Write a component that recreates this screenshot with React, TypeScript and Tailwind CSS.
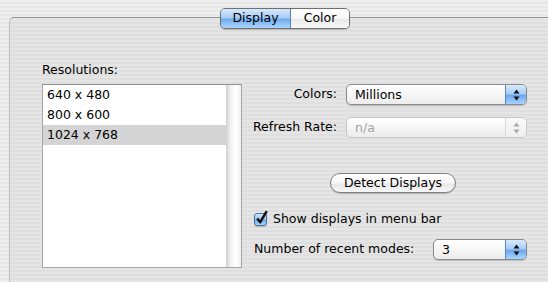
import React from 'react'

const stripes =
  'bg-[repeating-linear-gradient(180deg,#eeeeee_0px,#eeeeee_2px,#e8e8e8_2px,#e8e8e8_4px)]'

function Arrows({ disabled }: { disabled?: boolean }) {
  const c = disabled ? '#a8a8a8' : '#111'
  return (
    <svg width="7" height="12" viewBox="0 0 7 12">
      <path d="M3.5 0.5 L6.5 4.5 L0.5 4.5 Z" fill={c} />
      <path d="M3.5 11.5 L6.5 7.5 L0.5 7.5 Z" fill={c} />
    </svg>
  )
}

function Popup({
  value,
  className,
  disabled,
}: {
  value: string
  className: string
  disabled?: boolean
}) {
  return (
    <div
      className={`flex h-[21px] overflow-hidden rounded-[5px] border ${
        disabled
          ? 'border-[#c6c6c6] shadow-none'
          : 'border-[#8a8a8a] shadow-[0_1px_1px_rgba(0,0,0,0.18)]'
      } bg-[linear-gradient(180deg,#ffffff_0%,#f6f6f6_50%,#ececec_100%)] ${className}`}
    >
      <div
        className={`flex-1 pl-[8px] leading-[19px] ${
          disabled ? 'text-[#a3a3a3]' : 'text-black'
        }`}
      >
        {value}
      </div>
      <div
        className={`flex w-[21px] items-center justify-center border-l ${
          disabled
            ? 'border-[#d8d8d8] bg-[linear-gradient(180deg,#fafafa_0%,#efefef_100%)]'
            : 'border-[#5b86c4] bg-[linear-gradient(180deg,#d9eafc_0%,#a8cdf5_45%,#6ea8ec_55%,#a6d4ff_100%)]'
        }`}
      >
        <Arrows disabled={disabled} />
      </div>
    </div>
  )
}

export default function App() {
  const rows = ['640 x 480', '800 x 600', '1024 x 768']
  return (
    <div
      className={`h-[282px] w-[548px] overflow-hidden ${stripes} font-['DejaVu_Sans',sans-serif] text-[12.5px] text-black`}
    >
      {/* segmented tabs */}
      <div className="relative z-10 flex pl-[220px] pt-[8px]">
        <div className="flex h-[21px] overflow-hidden rounded-[5px] border border-[#6f6f6f] shadow-[0_1px_1px_rgba(0,0,0,0.2)]">
          <div className="flex w-[70px] items-center justify-center border-r border-[#5a7fb6] bg-[linear-gradient(180deg,#d6e9fc_0%,#a9cef6_45%,#72abee_55%,#a8d6ff_100%)] leading-none">
            Display
          </div>
          <div className="flex w-[58px] items-center justify-center bg-[linear-gradient(180deg,#ffffff_0%,#f7f7f7_50%,#e9e9e9_55%,#f8f8f8_100%)] leading-none">
            Color
          </div>
        </div>
      </div>

      {/* group box */}
      <div className="ml-[9px] -mt-[12px] h-[300px] w-[560px] rounded-tl-[5px] border-l border-t border-l-[#bdbdbd] border-t-[#8e8e8e] bg-black/[0.035] shadow-[inset_0_1px_0_rgba(255,255,255,0.5)]">
        <div className="flex items-start pl-[32px] pt-[44px]">
          {/* resolutions */}
          <div className="w-[200px]">
            <div className="h-[16px] leading-[16px]">Resolutions:</div>
            <div className="mt-[6px] flex h-[184px] border border-[#a5a5a5] border-t-[#8f8f8f] bg-white">
              <div className="flex-1">
                {rows.map((r, i) => (
                  <div
                    key={r}
                    className={`h-[20px] pl-[4px] leading-[20px] ${
                      i === 2 ? 'bg-[#d4d4d4]' : ''
                    }`}
                  >
                    {r}
                  </div>
                ))}
              </div>
              <div className="w-[15px] border-l border-[#d2d2d2] bg-[linear-gradient(90deg,#d9d9d9_0%,#f4f4f4_30%,#ffffff_60%,#f0f0f0_100%)]" />
            </div>
          </div>

          {/* settings */}
          <div className="flex w-[285px] flex-col">
            <div className="mt-[22px] flex items-center">
              <div className="w-[95px] text-right">Colors:</div>
              <Popup value="Millions" className="ml-[9px] w-[181px]" />
            </div>
            <div className="mt-[12px] flex items-center">
              <div className="w-[95px] text-right">Refresh Rate:</div>
              <Popup value="n/a" disabled className="ml-[9px] w-[181px]" />
            </div>
            <div className="mt-[35px] pl-[88px]">
              <div className="flex h-[20px] w-[126px] items-center justify-center rounded-full border border-[#7f7f7f] bg-[linear-gradient(180deg,#ffffff_0%,#f7f7f7_50%,#e8e8e8_55%,#f7f7f7_100%)] leading-none shadow-[0_1px_1px_rgba(0,0,0,0.2)]">
                Detect Displays
              </div>
            </div>
            <div className="mt-[18px] flex h-[16px] items-center pl-[12px]">
              <div className="relative h-[13px] w-[13px] rounded-[3px] border border-[#4f6f9e] bg-[linear-gradient(180deg,#d2e6fb_0%,#94c0f2_50%,#6ba6ec_55%,#a9d5ff_100%)] shadow-[0_1px_1px_rgba(0,0,0,0.2)]">
                <svg
                  width="13"
                  height="15"
                  viewBox="0 0 13 15"
                  className="absolute -top-[4px] left-[0px]"
                >
                  <path
                    d="M2.2 8.5 L5.2 12.2 L11.8 1.2"
                    fill="none"
                    stroke="#0d0d0d"
                    strokeWidth="2.4"
                    strokeLinejoin="round"
                  />
                </svg>
              </div>
              <span className="ml-[6px] leading-[16px]">Show displays in menu bar</span>
            </div>
            <div className="mt-[12px] flex items-center pl-[12px]">
              <div className="w-[170px]">Number of recent modes:</div>
              <Popup value="3" className="ml-[9px] w-[94px]" />
            </div>
          </div>
        </div>
      </div>
    </div>
  )
}
